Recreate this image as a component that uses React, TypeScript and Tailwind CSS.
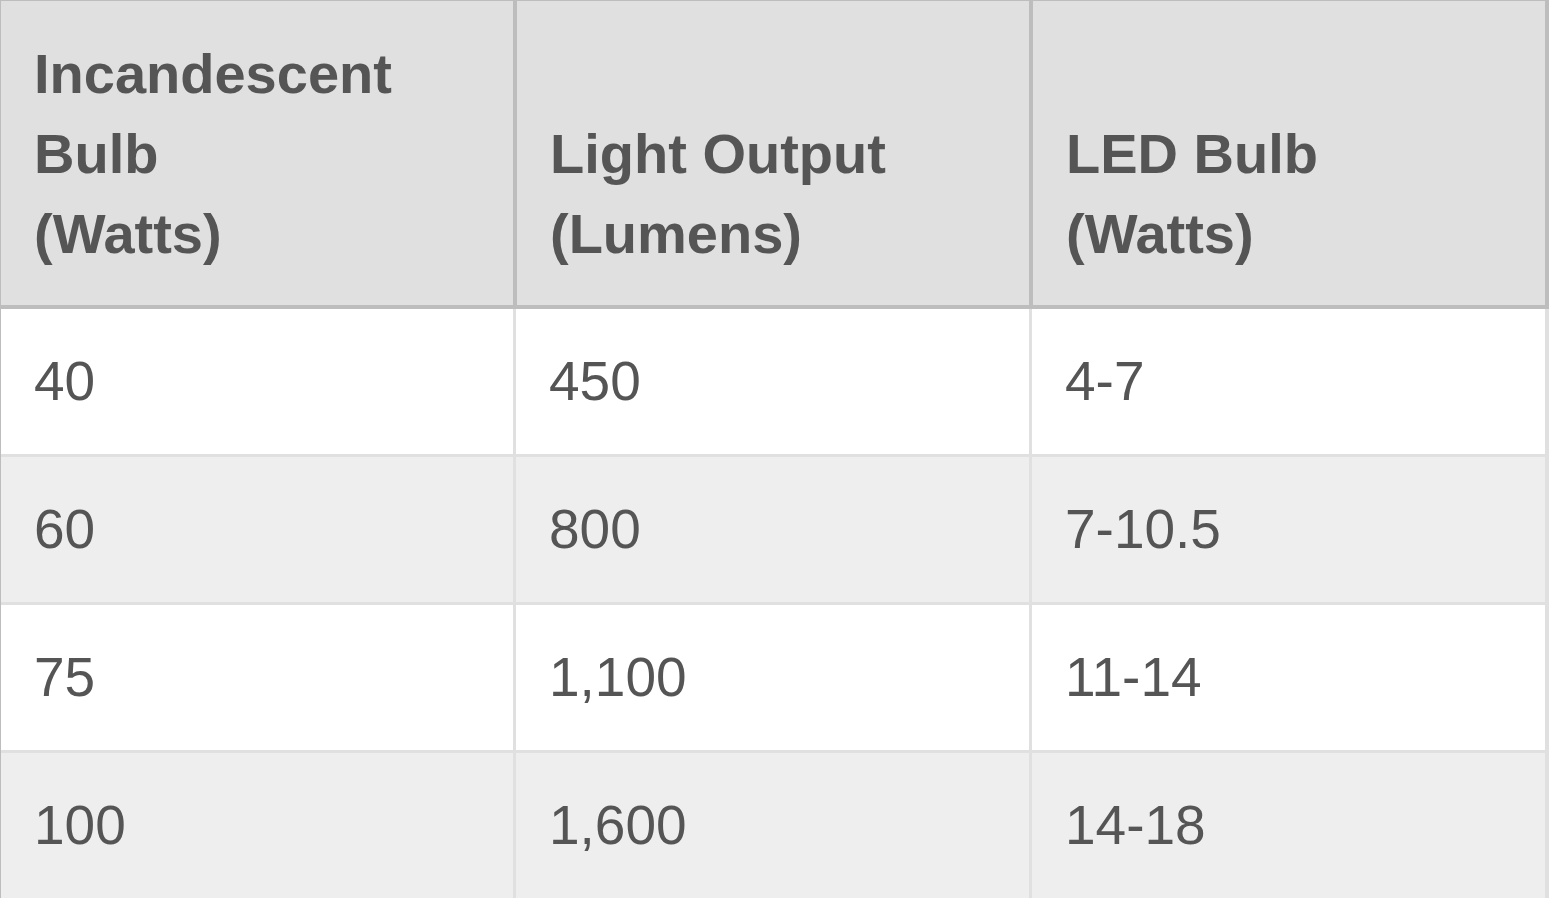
const headers = [
  ['Incandescent', 'Bulb', '(Watts)'],
  ['Light Output', '(Lumens)'],
  ['LED Bulb', '(Watts)'],
];

const rows = [
  ['40', '450', '4-7'],
  ['60', '800', '7-10.5'],
  ['75', '1,100', '11-14'],
  ['100', '1,600', '14-18'],
];

// body column widths, border included
const bodyCols = ['w-[515px] border-r-[3px]', 'w-[516px] border-r-[3px]', 'w-[517px] border-r-[4px]'];

export default function App() {
  return (
    <div className="h-[898px] w-[1550px] overflow-hidden bg-white font-['Liberation_Sans',Arial,sans-serif] text-[#555555]">
      <div className="w-[1549px] border-l border-t border-l-[#bdbdbd] border-t-[#bdbdbd]">
        {/* Header */}
        <div className="flex h-[308px] border-b-4 border-[#bdbdbd] bg-[#e0e0e0]">
          {headers.map((lines, i) => (
            <div
              key={i}
              className="flex w-[516px] flex-col justify-end border-r-4 border-[#bdbdbd] pb-[31px] pl-[33px] text-[56px] font-bold leading-[80px]"
            >
              {lines.map(l => (
                <div key={l}>{l}</div>
              ))}
            </div>
          ))}
        </div>

        {/* Rows */}
        {rows.map((row, r) => (
          <div
            key={r}
            className={`flex h-[148px] border-b-[3px] border-[#e0e0e0] ${r % 2 === 1 ? 'bg-[#eeeeee]' : 'bg-white'}`}
          >
            {row.map((cell, c) => (
              <div
                key={c}
                className={`flex items-center border-[#e0e0e0] pl-[33px] text-[55px] leading-none ${bodyCols[c]}`}
              >
                {cell}
              </div>
            ))}
          </div>
        ))}
      </div>
    </div>
  );
}
